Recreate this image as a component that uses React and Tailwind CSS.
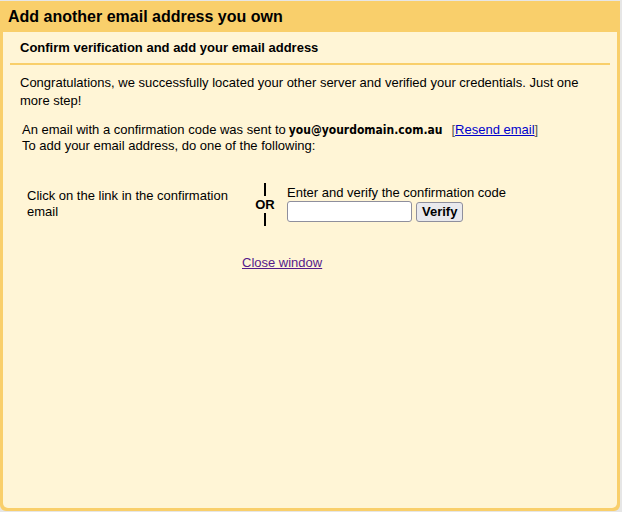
export default function App() {
  return (
    <div className="w-[622px] h-[512px] bg-[#e6e6e6] pt-px" style={{ fontFamily: '"Liberation Sans", Arial, sans-serif' }}>
      <div className="w-[620px] h-[510px] bg-[#f9cf6b] rounded-b-[6px] px-[3px] pb-[3px] flex flex-col text-black">
        <div className="h-[31px] pl-[5px] flex items-center text-[16px] font-bold leading-none">
          Add another email address you own
        </div>
        <div className="flex-1 bg-[#fff5d6] rounded-b-[5px] pt-[8px] px-[7px]">
          <div className="pl-[10px] text-[13px] font-bold leading-[16px] pb-[7px] border-b-2 border-[#f9cf6b]">
            Confirm verification and add your email address
          </div>
          <div className="pl-[10px] pr-[20px] pt-[9px] text-[13px] leading-[18px]">
            Congratulations, we successfully located your other server and verified your credentials. Just one more step!
          </div>
          <div className="pl-[12px] pt-[12px] text-[13px] leading-[16px]">
            <div className="flex items-baseline">
              <span>An email with a confirmation code was sent to</span>
              <span className="ml-[3px] font-bold text-[12px]" style={{ fontFamily: '"DejaVu Sans Condensed", "DejaVu Sans", Verdana, sans-serif', fontStretch: 'condensed' }}>you@yourdomain.com.au</span>
              <span className="ml-[9px] text-[#555]">[</span>
              <span className="text-[#0000cc] underline">Resend email</span>
              <span className="text-[#555]">]</span>
            </div>
            <div>To add your email address, do one of the following:</div>
          </div>
          <div className="flex pt-[29px] text-[13px] leading-[16px]">
            <div className="w-[240px] pl-[17px] pr-[18px] pt-[5px]">Click on the link in the confirmation email</div>
            <div className="w-[30px] flex flex-col items-center font-bold text-[13px]">
              <div className="w-[2px] h-[13px] bg-black" />
              <div className="leading-[17px]">OR</div>
              <div className="w-[2px] h-[13px] bg-black" />
            </div>
            <div className="flex flex-col pl-[7px] pt-[3px]">
              <div className="leading-[14px]">Enter and verify the confirmation code</div>
              <div className="flex items-center mt-[1px]">
                <input className="w-[125px] h-[21px] bg-white border border-[#8f8f9d] rounded-[3px]" />
                <button className="ml-[4px] h-[20px] px-[5px] bg-[#e9e9ed] border border-[#8f8f9d] rounded-[3px] font-bold text-[13px] leading-none">Verify</button>
              </div>
            </div>
          </div>
          <div className="pl-[232px] pt-[29px] text-[13px] leading-[16px]">
            <span className="text-[#551a8b] underline">Close window</span>
          </div>
        </div>
      </div>
    </div>
  );
}
